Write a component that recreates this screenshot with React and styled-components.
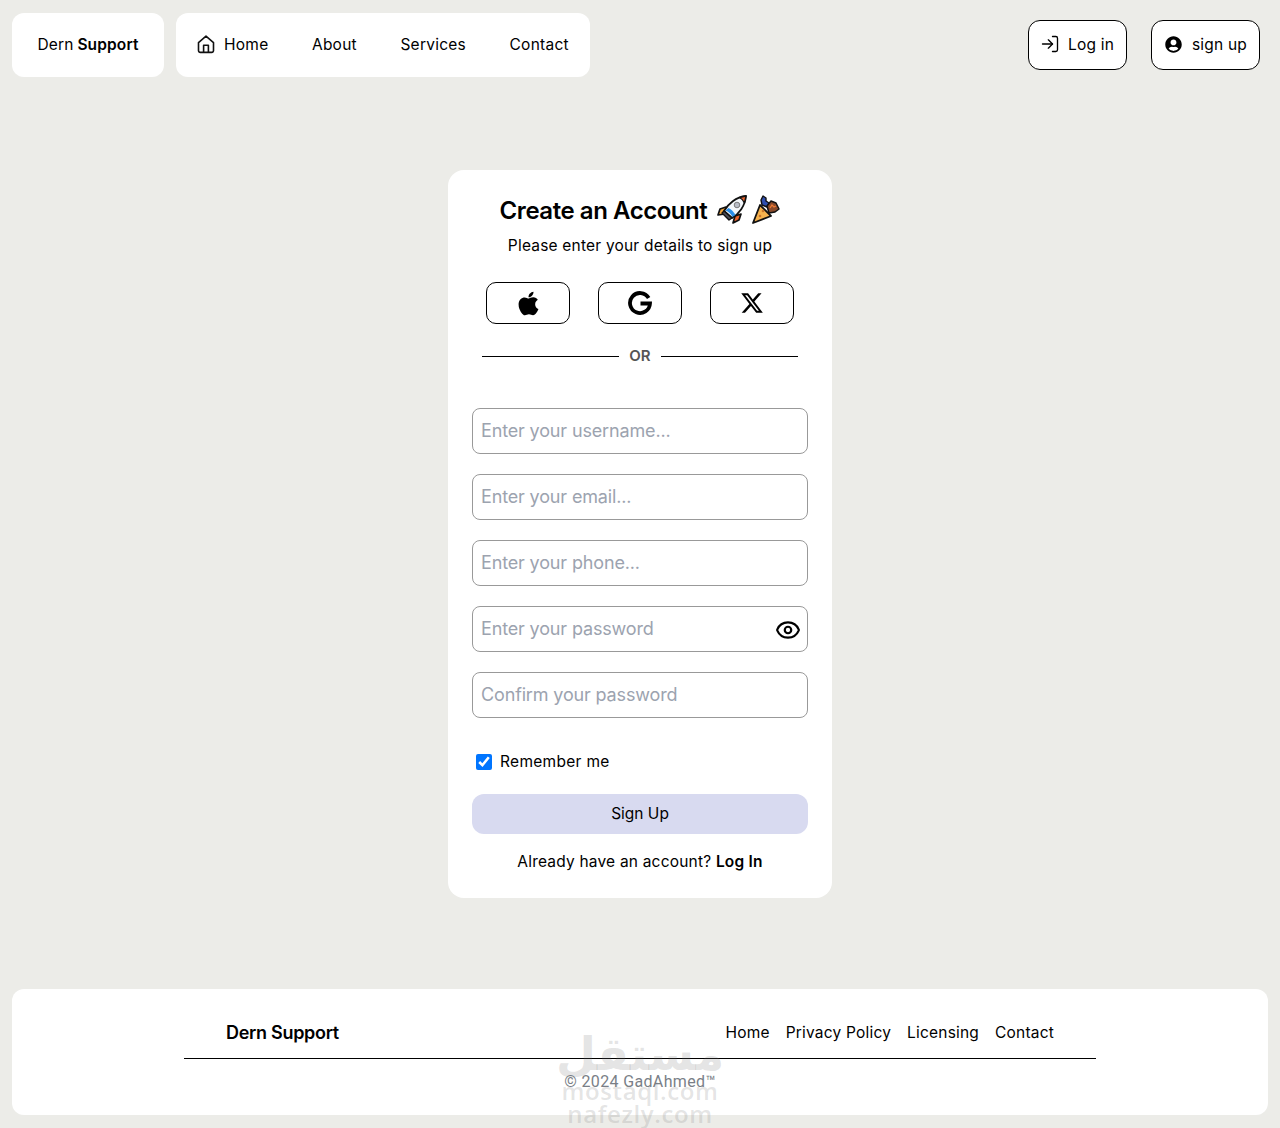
import styled, { createGlobalStyle } from "styled-components";
import { LogIn, Eye } from "lucide-react";
import { FaApple, FaUserCircle } from "react-icons/fa";
import { FaXTwitter } from "react-icons/fa6";

const GlobalStyle = createGlobalStyle`
  * {
    box-sizing: border-box;
  }

  body {
    margin: 0;
    background: #ecece8;
    color: #000;
    font-family: Inter, "Noto Sans", sans-serif;
    font-size: 15.5px;
    letter-spacing: 0.12px;
  }
`;

const Page = styled.div`
  position: relative;
  width: 1280px;
  height: 1128px;
  overflow: hidden;
`;

const Header = styled.header`
  display: flex;
  align-items: center;
  justify-content: space-between;
  padding: 13px 20px 0 12px;
`;

const HeaderGroup = styled.div`
  display: flex;
  gap: ${(p) => p.$gap}px;
  align-items: center;
`;

const Panel = styled.div`
  display: flex;
  align-items: center;
  height: 64px;
  padding-bottom: 2px;
  background: #fff;
  border-radius: 12px;
`;

const Logo = styled(Panel)`
  width: 152px;
  justify-content: center;

  b {
    font-weight: 600;
    margin-left: 4px;
  }
`;

const Nav = styled(Panel)`
  width: 414px;
  padding-left: 20px;
  gap: 43.5px;
  letter-spacing: 0.25px;
`;

const NavLink = styled.a`
  display: flex;
  align-items: center;
  gap: 8px;
`;

const AuthButton = styled.button`
  display: flex;
  align-items: center;
  gap: ${(p) => p.$gap}px;
  height: 50px;
  width: ${(p) => p.$width}px;
  padding: 0 12px 2px 0;
  justify-content: flex-end;
  border: 1px solid #000;
  border-radius: 12px;
  background: #fff;
  color: #000;
  font: inherit;
  letter-spacing: 0.2px;
  white-space: nowrap;
`;

const Main = styled.main`
  display: flex;
  justify-content: center;
  padding-top: 93px;
`;

const Card = styled.section`
  width: 384px;
  height: 728px;
  padding: 24px;
  background: #fff;
  border-radius: 16px;
`;

const Title = styled.h1`
  display: flex;
  justify-content: center;
  align-items: center;
  gap: 10px;
  height: 32px;
  margin: 0;
  font-size: 24px;
  font-weight: 600;
  letter-spacing: -0.45px;
`;

const Emojis = styled.span`
  display: flex;
  gap: 3px;
`;

const Subtitle = styled.p`
  margin: 8px 0 0;
  line-height: 24px;
  text-align: center;
  letter-spacing: 0.2px;
`;

const SocialRow = styled.div`
  display: flex;
  justify-content: center;
  gap: 28px;
  margin-top: 24px;
`;

const SocialButton = styled.button`
  display: flex;
  align-items: center;
  justify-content: center;
  width: 84px;
  height: 42px;
  padding: 0;
  border: 1px solid #000;
  border-radius: 10px;
  background: #fff;
  color: #000;
`;

const Divider = styled.div`
  display: flex;
  align-items: center;
  gap: 10px;
  margin: 23px 10px 0;
  color: #555;
  font-weight: 600;
  font-size: 15px;
  line-height: 18px;

  &::before,
  &::after {
    content: "";
    flex: 1;
    height: 1px;
    background: #000;
  }
`;

const Fields = styled.div`
  display: flex;
  flex-direction: column;
  gap: 20px;
  margin-top: 43px;
`;

const FieldWrap = styled.div`
  position: relative;
`;

const Input = styled.input`
  display: block;
  width: 100%;
  height: 46px;
  padding: 0 8px 2px;
  border: 1px solid #999;
  border-radius: 8px;
  background: #fff;
  font-family: inherit;
  font-size: 18px;
  letter-spacing: -0.15px;

  &::placeholder {
    color: #9ca3af;
    opacity: 1;
  }
`;

const EyeButton = styled.span`
  position: absolute;
  top: 11px;
  right: 7px;
  display: flex;
`;

const Remember = styled.label`
  display: flex;
  align-items: center;
  gap: 8px;
  margin: 33px 0 0 4px;
  line-height: 22px;
  letter-spacing: 0.3px;

  input {
    width: 16px;
    height: 16px;
    margin: 0;
    accent-color: #0075ff;
  }
`;

const Submit = styled.button`
  display: block;
  width: 100%;
  height: 40px;
  margin-top: 21px;
  padding: 0 0 2px;
  border: 0;
  border-radius: 12px;
  background: #d8daf0;
  color: #000;
  font: inherit;
`;

const SwitchText = styled.p`
  margin: 16px 0 0;
  line-height: 24px;
  text-align: center;
  letter-spacing: 0.2px;

  b {
    font-weight: 600;
  }
`;

const Footer = styled.footer`
  position: absolute;
  left: 12px;
  right: 12px;
  bottom: 13px;
  height: 126px;
  background: #fff;
  border-radius: 12px;
`;

const FooterInner = styled.div`
  width: 912px;
  margin: 0 auto;
`;

const FooterTop = styled.div`
  display: flex;
  align-items: center;
  justify-content: space-between;
  height: 70px;
  padding: 17px 42px 0;
  border-bottom: 1px solid #000;
`;

const FooterBrand = styled.span`
  font-size: 18px;
  font-weight: 600;
  letter-spacing: -0.3px;
`;

const FooterLinks = styled.nav`
  display: flex;
  gap: 16px;
  letter-spacing: 0.2px;
`;

const Copyright = styled.p`
  margin: 14px 0 0;
  font-family: Roboto, sans-serif;
  font-size: 16px;
  letter-spacing: 0.35px;
  line-height: 18px;
  text-align: center;
  color: #7a7f87;
`;

const Watermark = styled.div`
  position: absolute;
  left: 540px;
  top: 1029px;
  width: 200px;
  text-align: center;
  color: rgba(120, 120, 120, 0.2);
  font-family: "Open Sans", "DejaVu Sans", sans-serif;
  font-weight: 600;
  pointer-events: none;
`;

const WatermarkArabic = styled.div`
  font-family: "DejaVu Sans", sans-serif;
  font-weight: 700;
  font-size: 46px;
  line-height: 50px;
`;

const WatermarkLatin = styled.div`
  font-size: 24px;
  line-height: 23px;
  letter-spacing: 0.6px;
`;

const HomeIcon = () => (
  <svg width="20" height="20" viewBox="0 0 20 20" fill="none" stroke="#111" strokeWidth="1.6" strokeLinejoin="round">
    <path d="M2.5 8.6 10 2.2l7.5 6.4v8a1.8 1.8 0 0 1-1.8 1.8H4.3a1.8 1.8 0 0 1-1.8-1.8z" />
    <path d="M7.6 18.4v-7.2h4.8v7.2" />
  </svg>
);

const RocketEmoji = () => (
  <svg width="30" height="30" viewBox="0 0 30 30">
    <path d="M9 12 3 14l-2 6 7-1z" fill="#f3a63b" stroke="#111" strokeWidth="1.7" strokeLinejoin="round" />
    <path d="M18 21l-2 7 6-3 2-6z" fill="#e8622c" stroke="#111" strokeWidth="1.7" strokeLinejoin="round" />
    <path d="M7 16C11 9 19 2 29 1c-1 10-7 18-14 22z" fill="#f4f7fb" stroke="#111" strokeWidth="1.8" strokeLinejoin="round" />
    <path d="M7 16l8 7-3 2-7-7z" fill="#4b4b52" stroke="#111" strokeWidth="1.4" strokeLinejoin="round" />
    <path d="M22.5 2.5c2 1 4 3 5 5.5L29 1z" fill="#e8622c" stroke="#111" strokeWidth="1.3" strokeLinejoin="round" />
    <circle cx="20" cy="10" r="2.8" fill="#b8bcc6" stroke="#666" strokeWidth="0.8" />
    <path d="M8.5 15.5c3 1 5.5 3.5 7 6.5l3-2.2c-2-3-4-5.3-7-6.8z" fill="#2b8fe8" />
  </svg>
);

const PartyEmoji = () => (
  <svg width="30" height="30" viewBox="0 0 30 30">
    <path d="M3 28 10 10l11 11z" fill="#f5b24e" stroke="#111" strokeWidth="1.8" strokeLinejoin="round" />
    <path d="M13 1l3 2 0 3 3 2-2 4-5-2-1-5z" fill="#2f4fb0" stroke="#111" strokeWidth="1.4" strokeLinejoin="round" />
    <path d="M17 11l4-5 5 2 3 6-4 3-6 1z" fill="#8a4a2a" stroke="#111" strokeWidth="1.5" strokeLinejoin="round" />
    <path d="M20 13l2-3 2 2 2-1" fill="none" stroke="#ef7a33" strokeWidth="1.3" />
    <circle cx="10" cy="21" r="1.3" fill="#c9742a" />
    <circle cx="13" cy="16" r="1.3" fill="#c9742a" />
  </svg>
);

const GoogleGlyph = () => (
  <svg width="26" height="26" viewBox="0 0 26 26" fill="none">
    <path d="M21.66 8A10 10 0 1 0 23 13.5H13.5" stroke="#000" strokeWidth="3.8" />
  </svg>
);

const App = () => (
  <Page>
    <GlobalStyle />
    <Header>
      <HeaderGroup $gap={12}>
        <Logo>
          Dern <b>Support</b>
        </Logo>
        <Nav>
          <NavLink>
            <HomeIcon />
            Home
          </NavLink>
          <NavLink>About</NavLink>
          <NavLink>Services</NavLink>
          <NavLink>Contact</NavLink>
        </Nav>
      </HeaderGroup>
      <HeaderGroup $gap={24}>
        <AuthButton $width={99} $gap={8}>
          <LogIn size={20} strokeWidth={1.6} />
          Log in
        </AuthButton>
        <AuthButton $width={109} $gap={10}>
          <FaUserCircle size={17} />
          sign up
        </AuthButton>
      </HeaderGroup>
    </Header>

    <Main>
      <Card>
        <Title>
          Create an Account
          <Emojis>
            <RocketEmoji />
            <PartyEmoji />
          </Emojis>
        </Title>
        <Subtitle>Please enter your details to sign up</Subtitle>
        <SocialRow>
          <SocialButton>
            <FaApple size={27} />
          </SocialButton>
          <SocialButton>
            <GoogleGlyph />
          </SocialButton>
          <SocialButton>
            <FaXTwitter size={24} />
          </SocialButton>
        </SocialRow>
        <Divider>OR</Divider>
        <Fields>
          <Input placeholder="Enter your username..." />
          <Input placeholder="Enter your email..." />
          <Input placeholder="Enter your phone..." />
          <FieldWrap>
            <Input placeholder="Enter your password" />
            <EyeButton>
              <Eye size={26} strokeWidth={2} />
            </EyeButton>
          </FieldWrap>
          <Input placeholder="Confirm your password" />
        </Fields>
        <Remember>
          <input type="checkbox" defaultChecked />
          Remember me
        </Remember>
        <Submit>Sign Up</Submit>
        <SwitchText>
          Already have an account? <b>Log In</b>
        </SwitchText>
      </Card>
    </Main>

    <Footer>
      <FooterInner>
        <FooterTop>
          <FooterBrand>Dern Support</FooterBrand>
          <FooterLinks>
            <a>Home</a>
            <a>Privacy Policy</a>
            <a>Licensing</a>
            <a>Contact</a>
          </FooterLinks>
        </FooterTop>
        <Copyright>© 2024 GadAhmed™</Copyright>
      </FooterInner>
    </Footer>

    <Watermark>
      <WatermarkArabic>مستقل</WatermarkArabic>
      <WatermarkLatin>mostaql.com</WatermarkLatin>
      <WatermarkLatin>nafezly.com</WatermarkLatin>
    </Watermark>
  </Page>
);

export default App;
